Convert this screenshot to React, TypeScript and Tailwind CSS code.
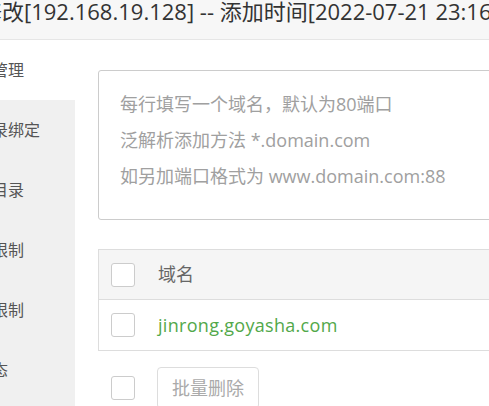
const font = "font-['Open_Sans','Noto_Sans_CJK_SC',sans-serif]";

const menu = ["域名管理", "子目录绑定", "网站目录", "流量限制", "访问限制", "伪静态"];

function Checkbox() {
  return <span className="block size-6 shrink-0 rounded-[3px] border border-[#cccccc] bg-white" />;
}

export default function App() {
  return (
    <div className={`h-[406px] w-[489px] overflow-hidden bg-white ${font}`}>
      <header className="h-10 overflow-hidden whitespace-nowrap border-b border-[#e6e6e6] bg-[#f7f7f7]">
        <p className="-ml-[20px] text-[22px] leading-[22px] text-[#333]">
          修改[192.168.19.128] -- 添加时间[2022-07-21 23:16:52]
        </p>
      </header>

      <div className="flex">
        <nav className="flex h-[366px] w-[75px] shrink-0 flex-col overflow-hidden bg-[#f0f0f0]">
          {menu.map((item, i) => (
            <div
              key={item}
              className={`flex h-[60px] shrink-0 items-center whitespace-nowrap text-[16px] text-[#555] ${
                i === 0 ? "bg-white" : ""
              }`}
            >
              <span className="-ml-[40px]">{item}</span>
            </div>
          ))}
        </nav>

        <main className="min-w-0 flex-1 overflow-hidden pl-[23px] pt-[30px]">
          <div className="h-[150px] w-[440px] rounded-[3px] border border-[#cccccc] px-[21px] py-[15px] text-[18px] leading-[36px] whitespace-nowrap text-[#a0a0a0]">
            <p>每行填写一个域名，默认为80端口</p>
            <p>泛解析添加方法 *.domain.com</p>
            <p>如另加端口格式为 www.domain.com:88</p>
          </div>

          <div className="mt-[29px] w-[440px] border border-[#dddddd] text-[18px]">
            <div className="flex h-[50px] items-center gap-[23px] border-b border-[#dddddd] bg-[#f5f5f5] px-3">
              <Checkbox />
              <span className="text-[#666]">域名</span>
            </div>
            <div className="flex h-[50px] items-center gap-[23px] px-3">
              <Checkbox />
              <span className="tracking-[0.3px] text-[#52a84a]">jinrong.goyasha.com</span>
            </div>
          </div>

          <div className="mt-4 flex items-start gap-[22px] px-[13px]">
            <div className="pt-[9px]">
              <Checkbox />
            </div>
            <button className="h-[42px] rounded-[4px] border border-[#dddddd] bg-white px-[14px] text-[18px] text-[#aaaaaa]">
              批量删除
            </button>
          </div>
        </main>
      </div>
    </div>
  );
}
